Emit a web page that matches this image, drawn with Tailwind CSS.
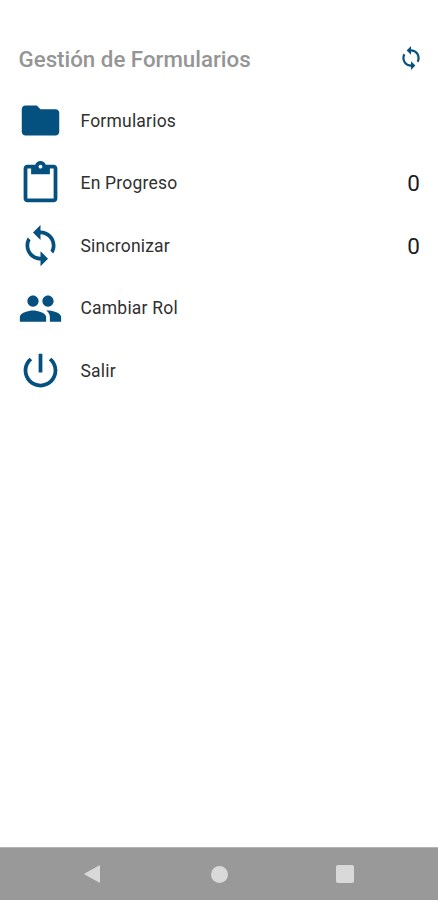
<!DOCTYPE html>
<html lang="es">
<head>
    <meta charset="UTF-8">
    <meta name="viewport" content="width=device-width, initial-scale=1.0">
    <title>Gestión de Formularios</title>
    <script src="https://cdn.jsdelivr.net/npm/@tailwindcss/browser@4"></script>
</head>
<body class="bg-white font-[Roboto,sans-serif]">

    <div class="flex flex-col h-screen overflow-hidden">

        <!-- header -->
        <header class="flex items-center justify-between h-[89.4px] pt-[27px] pl-[18.5px] pr-[14px]">
            <h1 class="pt-[3px] text-[22.3px] font-medium text-[#959595] whitespace-nowrap">Gestión de Formularios</h1>
            <button class="text-[#04507f]">
                <svg class="w-[26px] h-[26px]" viewBox="0 0 24 24" fill="currentColor"><path d="M12 4V1L8 5l4 4V6c3.31 0 6 2.69 6 6 0 1.01-.25 1.97-.7 2.8l1.46 1.46C19.54 15.03 20 13.57 20 12c0-4.42-3.58-8-8-8zm0 14c-3.31 0-6-2.69-6-6 0-1.01.25-1.97.7-2.8L5.24 7.74C4.46 8.97 4 10.43 4 12c0 4.42 3.58 8 8 8v3l4-4-4-4v3z"/></svg>
            </button>
        </header>

        <!-- menu -->
        <nav class="flex-1 pl-[18px] pr-[18px] text-[#303030] text-[17.5px] tracking-[0.2px]">
            <a class="flex items-center h-[62.5px]">
                <svg class="w-[45px] h-[45px] text-[#04507f]" viewBox="0 0 24 24" fill="currentColor"><path d="M10 4H4c-1.1 0-1.99.9-1.99 2L2 18c0 1.1.9 2 2 2h16c1.1 0 2-.9 2-2V8c0-1.1-.9-2-2-2h-8l-2-2z"/></svg>
                <span class="ml-[17.5px]">Formularios</span>
            </a>
            <a class="flex items-center h-[62.5px]">
                <svg class="w-[45px] h-[45px] text-[#04507f]" viewBox="0 0 24 24" fill="currentColor"><path d="M19 2h-4.18C14.4.84 13.3 0 12 0c-1.3 0-2.4.84-2.82 2H5c-1.1 0-2 .9-2 2v16c0 1.1.9 2 2 2h14c1.1 0 2-.9 2-2V4c0-1.1-.9-2-2-2zm-7 0c.55 0 1 .45 1 1s-.45 1-1 1-1-.45-1-1 .45-1 1-1zm7 18H5V4h2v3h10V4h2v16z"/></svg>
                <span class="ml-[17.5px]">En Progreso</span>
                <span class="ml-auto pt-[2px] text-[22.5px] tracking-normal text-[#1c1c1c]">0</span>
            </a>
            <a class="flex items-center h-[62.5px]">
                <svg class="w-[45px] h-[45px] text-[#04507f]" viewBox="0 0 24 24" fill="currentColor"><path d="M12 4V1L8 5l4 4V6c3.31 0 6 2.69 6 6 0 1.01-.25 1.97-.7 2.8l1.46 1.46C19.54 15.03 20 13.57 20 12c0-4.42-3.58-8-8-8zm0 14c-3.31 0-6-2.69-6-6 0-1.01.25-1.97.7-2.8L5.24 7.74C4.46 8.97 4 10.43 4 12c0 4.42 3.58 8 8 8v3l4-4-4-4v3z"/></svg>
                <span class="ml-[17.5px]">Sincronizar</span>
                <span class="ml-auto pt-[2px] text-[22.5px] tracking-normal text-[#1c1c1c]">0</span>
            </a>
            <a class="flex items-center h-[62.5px]">
                <svg class="w-[45px] h-[45px] text-[#04507f]" viewBox="0 0 24 24" fill="currentColor"><path d="M16 11c1.66 0 2.99-1.34 2.99-3S17.66 5 16 5c-1.66 0-3 1.34-3 3s1.34 3 3 3zm-8 0c1.66 0 2.99-1.34 2.99-3S9.66 5 8 5C6.34 5 5 6.34 5 8s1.34 3 3 3zm0 2c-2.33 0-7 1.17-7 3.5V19h14v-2.5c0-2.33-4.67-3.5-7-3.5zm8 0c-.29 0-.62.02-.97.05 1.16.84 1.97 1.97 1.97 3.45V19h6v-2.5c0-2.33-4.67-3.5-7-3.5z"/></svg>
                <span class="ml-[17.5px]">Cambiar Rol</span>
            </a>
            <a class="flex items-center h-[62.5px]">
                <svg class="w-[45px] h-[45px] text-[#04507f]" viewBox="0 0 24 24" fill="currentColor"><path d="M13 3h-2v10h2V3zm4.83 2.17l-1.42 1.42C17.99 7.86 19 9.81 19 12c0 3.87-3.13 7-7 7s-7-3.13-7-7c0-2.19 1.01-4.14 2.58-5.42L6.17 5.17C4.23 6.82 3 9.26 3 12c0 4.97 4.03 9 9 9s9-4.03 9-9c0-2.74-1.23-5.18-3.17-6.83z"/></svg>
                <span class="ml-[17.5px]">Salir</span>
            </a>
        </nav>

        <!-- android navigation bar -->
        <footer class="flex items-center justify-between h-[53px] pl-[83px] pr-[84px] bg-[#999999] border-t border-[#b4b4b4] text-[#d9d9d9]">
            <svg class="w-[18px] h-[20px]" viewBox="0 0 18 20" fill="currentColor" stroke="currentColor" stroke-linejoin="round"><path d="M1.7 10L16.5 1.7v16.6z"/></svg>
            <div class="w-[17px] h-[17px] ml-px rounded-full bg-[#d9d9d9]"></div>
            <div class="w-[18px] h-[18px] rounded-xs bg-[#d9d9d9]"></div>
        </footer>

    </div>

</body>
</html>
